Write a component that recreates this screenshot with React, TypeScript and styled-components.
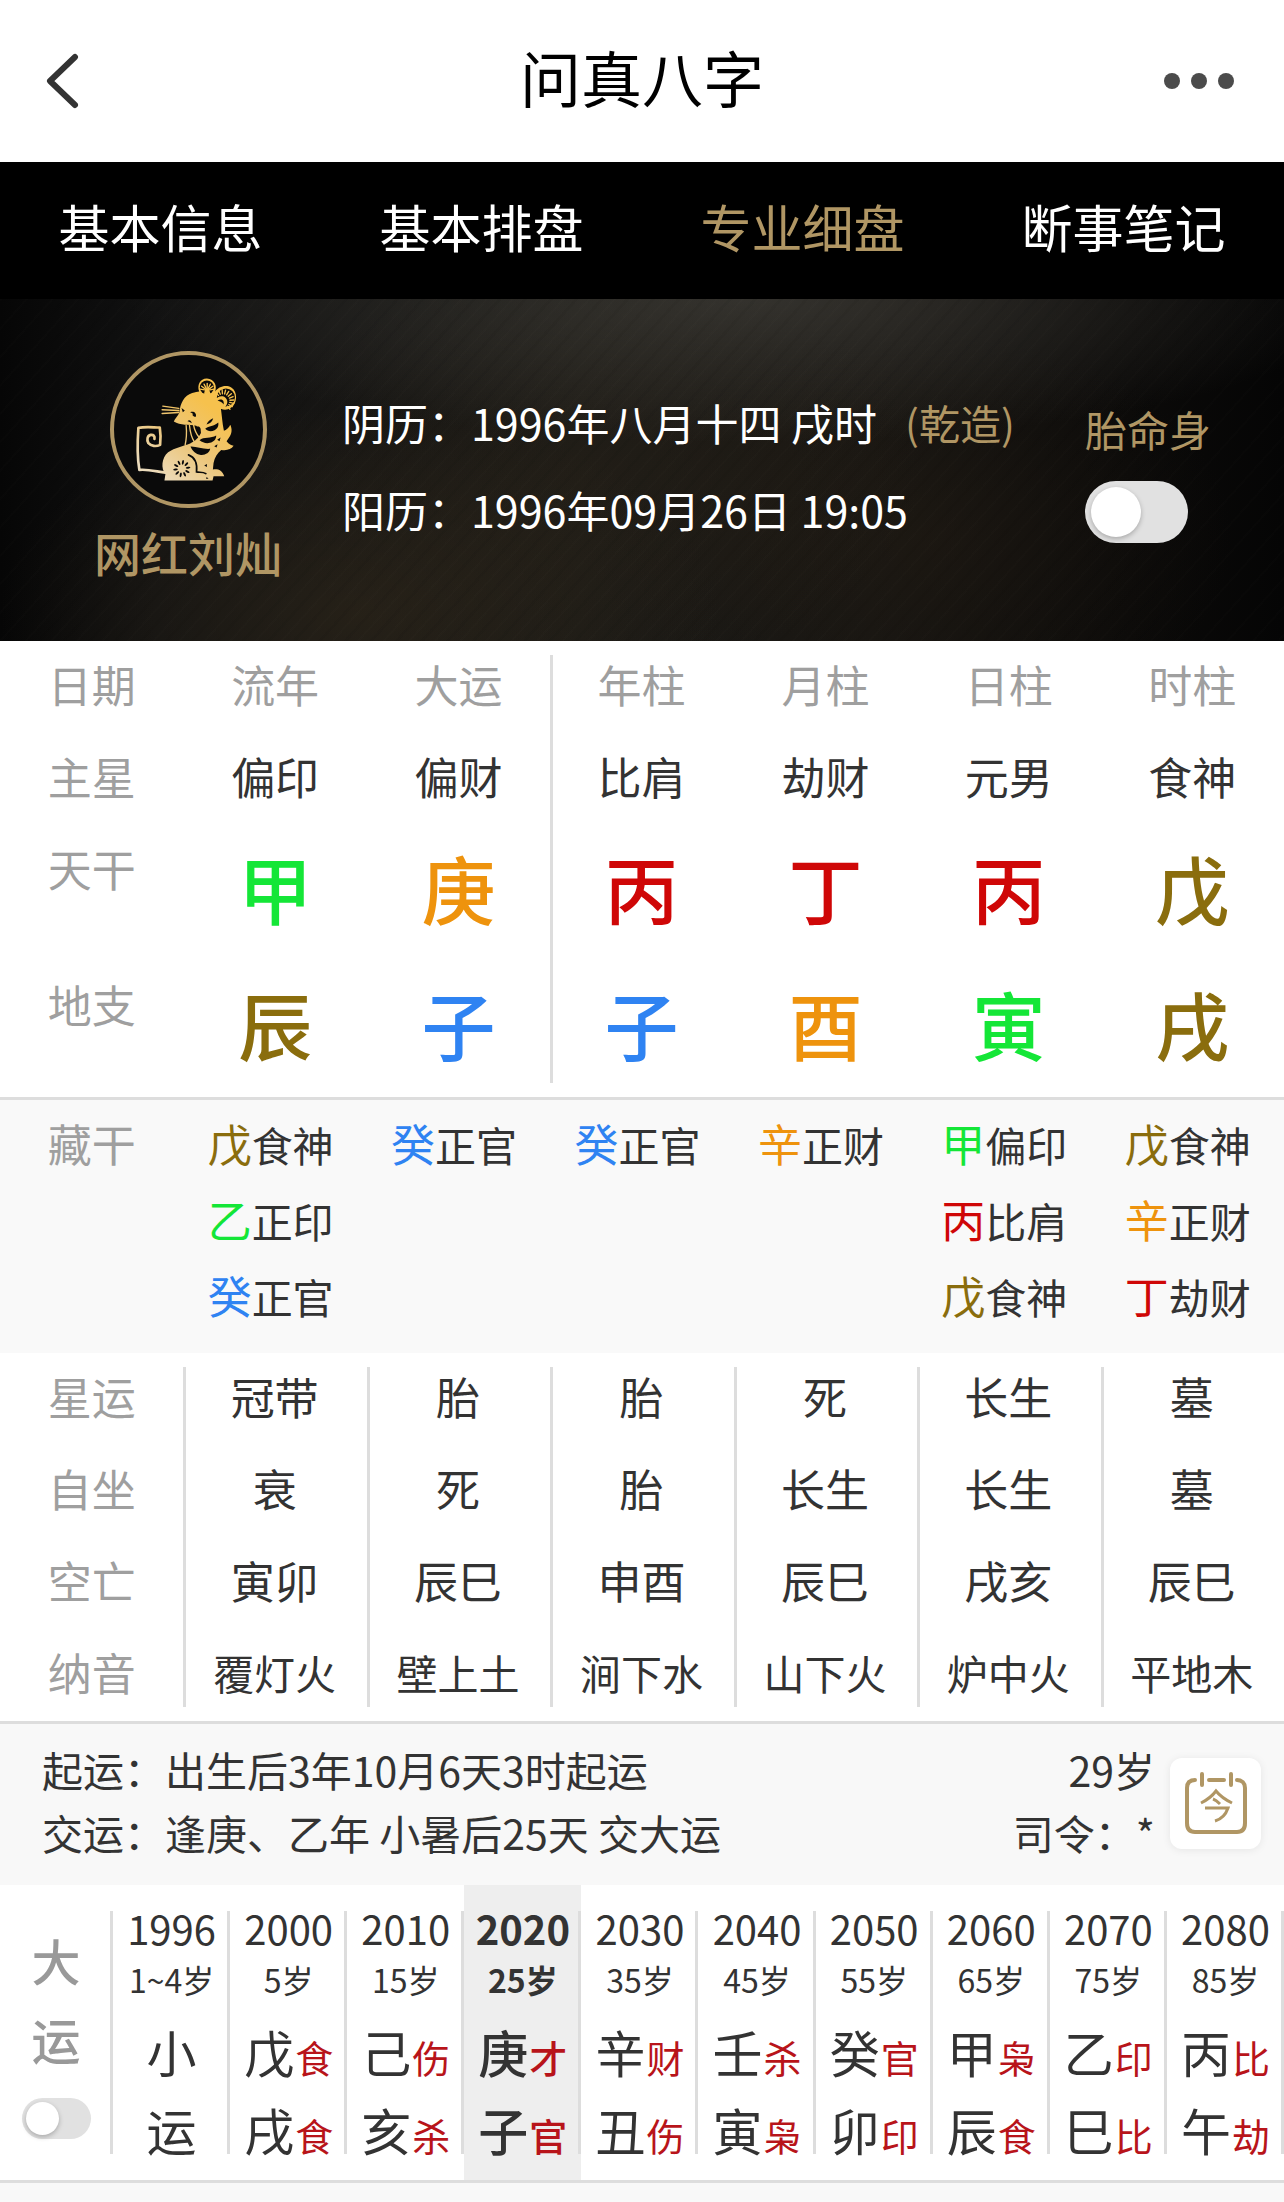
import React, { useState } from "react";
import styled, { createGlobalStyle, css } from "styled-components";

const GOLD = "#b09664";
const INK = "#333333";
const MUTED = "#9f9f9f";
const LINE = "#dddddd";

const wuxing = {
  wood: "#14e637",
  fire: "#cf0707",
  earth: "#8a6d0d",
  metal: "#ee930d",
  water: "#2f83f2",
};
type Element = keyof typeof wuxing;

const elementOf: Record<string, Element> = {
  甲: "wood", 乙: "wood", 寅: "wood",
  丙: "fire", 丁: "fire",
  戊: "earth", 辰: "earth", 戌: "earth",
  庚: "metal", 辛: "metal", 酉: "metal",
  癸: "water", 子: "water",
};

const GlobalStyle = createGlobalStyle`
  *, *::before, *::after { box-sizing: border-box; }
  body {
    margin: 0;
    background: #f8f8f8;
    color: ${INK};
    font-family: "Noto Sans CJK SC", "Noto Sans", sans-serif;
    font-size: 44px;
  }
  button { font: inherit; color: inherit; border: 0; padding: 0; background: none; cursor: pointer; }
`;

/* ---------- top bar ---------- */

const TopBar = styled.header`
  display: grid;
  grid-template-columns: 1fr auto 1fr;
  align-items: center;
  height: 162px;
  padding: 0 46px;
  background: #fff;
`;

const Title = styled.h1`
  margin: 0;
  padding-bottom: 8px;
  font-size: 61px;
  font-weight: 400;
  line-height: 80px;
  color: #000;
`;

const IconButton = styled.button<{ $end?: boolean }>`
  display: flex;
  justify-self: ${(p) => (p.$end ? "end" : "start")};
`;

/* ---------- tabs ---------- */

const Tabs = styled.nav`
  display: grid;
  grid-template-columns: repeat(4, 1fr);
  background: #000;
`;

const Tab = styled.button<{ $active: boolean }>`
  height: 137px;
  padding-bottom: 10px;
  font-size: 51px;
  line-height: 68px;
  color: ${(p) => (p.$active ? GOLD : "#fff")};
`;

/* ---------- profile ---------- */

const Hero = styled.section`
  display: flex;
  align-items: flex-start;
  padding: 52px 73px 57px 94px;
  background:
    repeating-linear-gradient(132deg, rgba(255, 240, 210, 0.008) 0 2px, transparent 2px 9px, rgba(0, 0, 0, 0.05) 9px 12px, transparent 12px 19px),
    radial-gradient(ellipse 48% 42% at 58% 0%, rgba(74, 72, 66, 0.55), transparent),
    radial-gradient(ellipse 28% 60% at 28% 92%, rgba(54, 44, 28, 0.5), transparent),
    radial-gradient(ellipse 26% 60% at 46% 50%, rgba(44, 36, 24, 0.4), transparent),
    radial-gradient(ellipse 24% 60% at 72% 70%, rgba(38, 30, 20, 0.4), transparent),
    linear-gradient(90deg, #060606 0%, #111111 12%, #1a1916 45%, #171512 68%, #0b0a09 88%, #050505 100%);
`;

const Profile = styled.div`
  display: flex;
  flex-direction: column;
  align-items: center;
  gap: 12px;
  width: 188px;
`;

const ProfileName = styled.div`
  font-size: 47px;
  font-weight: 500;
  line-height: 64px;
  white-space: nowrap;
  color: ${GOLD};
`;

const Dates = styled.div`
  flex: 1;
  padding: 28px 0 0 60px;
`;

const DateLine = styled.p`
  display: flex;
  margin: 0;
  font-size: 43px;
  line-height: 87px;
  white-space: nowrap;
  color: #fff;
`;

const Gender = styled.span`
  padding-left: 28px;
  font-size: 41px;
  color: ${GOLD};
`;

const ToggleField = styled.label`
  display: flex;
  flex-direction: column;
  align-items: flex-start;
  gap: 22px;
  width: 126px;
  padding-top: 48px;
  font-size: 42px;
  line-height: 60px;
  white-space: nowrap;
  color: ${GOLD};
`;

const Switch = styled.input<{ $small?: boolean }>`
  --w: ${(p) => (p.$small ? "69px" : "103px")};
  --h: ${(p) => (p.$small ? "41px" : "62px")};
  --pad: ${(p) => (p.$small ? "4px" : "6px")};
  appearance: none;
  display: flex;
  width: var(--w);
  height: var(--h);
  margin: 0;
  padding: var(--pad);
  border-radius: 31px;
  background: #e1e1e1;
  cursor: pointer;

  &::before {
    content: "";
    height: 100%;
    aspect-ratio: 1;
    border-radius: 50%;
    background: #fff;
    box-shadow: 0 2px 5px rgba(0, 0, 0, 0.25);
  }
  &:checked { justify-content: flex-end; background: ${GOLD}; }
`;

/* ---------- pillar tables ---------- */

const Panel = styled.section<{ $shade?: boolean; $ruled?: boolean }>`
  padding: 14px 0;
  background: ${(p) => (p.$shade ? "#f9f9f9" : "#fff")};
  ${(p) => p.$ruled && css`border-bottom: 3px solid ${LINE};`}
`;

const Grid = styled.table`
  width: 100%;
  table-layout: fixed;
  border-spacing: 0;
`;

const cellBase = css`
  padding: 0 0 34px;
  font-weight: 400;
  line-height: 58px;
  text-align: center;
  vertical-align: top;
  white-space: nowrap;
  tbody tr:last-child > & { padding-bottom: 6px; }
`;

const split = css`
  border-left: 3px solid ${LINE};
  padding-right: 4px;
`;

const Label = styled.th`
  ${cellBase}
  color: ${MUTED};
`;

const Cell = styled.td<{ $split?: boolean; $small?: boolean }>`
  ${cellBase}
  ${(p) => p.$split && split}
  ${(p) => p.$small && css`font-size: 41px;`}
`;

const ColumnHead = styled(Label)<{ $split?: boolean }>`
  ${(p) => p.$split && split}
`;

const BigCell = styled(Cell)<{ $element: Element }>`
  padding-bottom: 40px;
  font-size: 74px;
  font-weight: 500;
  line-height: 96px;
  color: ${(p) => wuxing[p.$element]};
  tbody tr:last-child > & { padding-bottom: 12px; }
`;

const HiddenPanel = styled(Panel)`
  padding: 5px 0 14px;
`;

const HiddenLine = styled.div`
  display: flex;
  justify-content: center;
  align-items: baseline;
  height: 76px;
  padding-right: 9px;
  font-size: 41px;
  line-height: 76px;
`;

const HiddenLabel = styled(Label)`
  line-height: 76px;
`;

const Stem = styled.span<{ $element: Element }>`
  font-size: 44px;
  color: ${(p) => wuxing[p.$element]};
`;

/* ---------- luck start info ---------- */

const LuckInfo = styled.section`
  display: flex;
  align-items: center;
  padding: 14px 23px 21px 42px;
  font-size: 41px;
  line-height: 63px;
  white-space: nowrap;
`;

const InfoLines = styled.div<{ $end?: boolean }>`
  ${(p) => (p.$end ? css`text-align: right; padding-right: 15px;` : css`flex: 1;`)}
  p { margin: 0; }
`;

const TodayButton = styled.button`
  display: flex;
  align-items: center;
  justify-content: center;
  width: 91px;
  height: 91px;
  margin-top: 4px;
  border-radius: 12px;
  background: #fff;
  box-shadow: 0 1px 8px rgba(0, 0, 0, 0.08);
`;

/* ---------- ten-year luck ---------- */

const Luck = styled.section`
  display: flex;
  background: #fff;
  border-bottom: 3px solid ${LINE};
`;

const LuckSide = styled.label`
  display: flex;
  flex-direction: column;
  align-items: center;
  width: 113px;
  height: 243px;
  margin: 26px 0;
  padding: 9px 0 0 2px;
  border-right: 3px solid ${LINE};
  font-size: 49px;
  font-weight: 500;
  line-height: 79px;
  color: #999;
`;

const SideText = styled.span`
  width: 49px;
  margin-bottom: 20px;
`;

const LuckSteps = styled.div`
  flex: 1;
  display: grid;
  grid-template-columns: repeat(10, 1fr);
`;

const Step = styled.button<{ $active: boolean }>`
  min-width: 0;
  padding: 26px 0;
  background: ${(p) => (p.$active ? "#eeeeee" : "transparent")};
  font-weight: ${(p) => (p.$active ? 700 : 400)};
`;

const StepBody = styled.span`
  display: flex;
  flex-direction: column;
  align-items: center;
  height: 243px;
  padding-left: 3px;
  border-right: 3px solid ${LINE};
  white-space: nowrap;
`;

const Year = styled.span`
  font-size: 40px;
  line-height: 34px;
`;

const Age = styled.span`
  margin: 14px 0 28px;
  font-size: 32px;
  line-height: 40px;
`;

const Pair = styled.span<{ $active: boolean }>`
  display: flex;
  align-items: baseline;
  gap: 1px;
  height: 48px;
  margin-bottom: 30px;
  font-size: 50px;
  font-weight: ${(p) => (p.$active ? 500 : 400)};
  line-height: 48px;
  &:last-child { margin-bottom: 0; }
`;

const God = styled.span`
  font-size: 38px;
  color: #b8141a;
`;

/* ---------- drawings ---------- */

const RatBadge = () => {
  const petals = Array.from({ length: 10 }, (_, i) => i * 36 + 10);
  const fan = (cx: number, cy: number, r0: number, r1: number, from: number, to: number, n: number) =>
    Array.from({ length: n }, (_, i) => {
      const a = ((from + ((to - from) * i) / (n - 1)) * Math.PI) / 180;
      return (
        <line key={i} x1={cx + r0 * Math.cos(a)} y1={cy + r0 * Math.sin(a)} x2={cx + r1 * Math.cos(a)} y2={cy + r1 * Math.sin(a)} />
      );
    });
  return (
    <svg width="157" height="157" viewBox="30 33 470 470" aria-hidden="true">
      <defs>
        <linearGradient id="rat" gradientUnits="userSpaceOnUse" x1="330" y1="200" x2="170" y2="410">
          <stop offset="0" stopColor="#f6c14d" />
          <stop offset="0.5" stopColor="#ecc67b" />
          <stop offset="1" stopColor="#ecdcbd" />
        </linearGradient>
      </defs>
      <circle cx="265" cy="268" r="229" fill="#0a0a0a" stroke={GOLD} strokeWidth="12" />
      <g fill="none" stroke="url(#rat)" strokeLinecap="round" strokeLinejoin="round">
        <path strokeWidth="8" d="M196 397 C170 394 142 386 118 389 C111 350 112 305 115 263 C138 259 160 262 179 262 C182 281 182 298 180 314 C168 320 153 318 145 309 C139 299 142 286 152 284 C160 283 165 288 163 296" />
        <path strokeWidth="4" d="M188 198 L236 205 M186 209 L236 211 M186 220 L236 217" />
        <path strokeWidth="4" d="M258 256 C260 278 259 296 255 314 M268 256 C270 276 274 292 282 304 M280 254 C283 270 289 282 297 292" />
      </g>
      <path
        fill="url(#rat)"
        d="M221 244 C224 235 232 229 238 217 C240 190 252 166 276 159 C285 156 292 155 297 154 C290 136 299 115 320 115 C343 116 352 138 344 155 C354 140 376 132 393 142 C413 154 412 190 392 203 C382 210 371 210 362 206 C365 226 366 248 371 272 C378 270 387 262 390 254 C396 266 396 281 385 294 L379 303 C386 312 393 315 400 317 C393 328 378 332 363 329 C352 338 343 351 340 368 L338 388 C350 385 366 388 372 408 L340 408 L337 421 L193 421 L196 401 C182 386 184 352 204 336 C224 323 250 318 270 310 C284 304 297 292 302 278 C300 270 295 262 288 257 C268 252 240 257 221 244 Z"
      />
      <circle cx="320" cy="142" r="21" fill="#0a0a0a" />
      <circle cx="377" cy="172" r="27" fill="#0a0a0a" />
      <g stroke="url(#rat)" strokeWidth="4" strokeLinecap="round">
        {fan(321, 151, 4, 21, 190, 350, 7)}
        {fan(368, 182, 21, 33, 230, 410, 11)}
      </g>
      <path fill="url(#rat)" d="M312 166 C311 150 318 142 326 150 C331 156 331 162 329 168 Z M340 205 C338 180 352 164 372 170 C386 178 384 198 366 206 Z" />
      <g fill="#0a0a0a">
        <path d="M352 181 C363 174 373 180 370 193 C366 186 360 184 352 181 Z" />
        <path d="M244 204 L254 211 L248 216 Z M262 243 C266 238 273 240 275 249 C270 245 266 244 262 243 Z" />
        <path d="M270 216 C281 212 290 219 287 230 C282 230 278 227 276 223 C280 224 282 221 270 216 Z" />
        <path d="M319 253 C323 243 331 237 339 234 C337 243 330 250 319 253 Z M289 260 C298 257 304 261 301 281 C296 276 292 268 289 260 Z" />
        <path d="M315 266 C326 256 341 259 354 247 C356 256 352 266 343 270 C332 276 322 273 315 266 Z" />
        <path d="M298 300 C311 289 332 296 348 286 C348 297 341 305 329 308 C316 311 307 306 298 300 Z" />
        <path d="M271 319 C289 318 308 328 330 326 C328 338 316 345 302 344 C286 342 276 332 271 319 Z" />
        <path d="M351 299 L361 292 L358 303 Z M342 318 L352 312 L349 322 Z M312 376 L320 371 L320 380 Z M319 410 L325 415 L318 416 Z" />
      </g>
      <path fill="none" stroke="#0a0a0a" strokeWidth="5" strokeLinecap="round" d="M265 344 C283 351 292 368 289 395 C298 397 308 394 317 400" />
      {petals.map((a) => (
        <ellipse key={a} cx="245" cy="366" rx="3" ry="7" fill="#0a0a0a" transform={`rotate(${a} 245 385)`} />
      ))}
    </svg>
  );
};

const CalendarIcon = () => (
  <svg width="64" height="64" viewBox="0 0 64 64" fill="none" stroke={GOLD} strokeWidth="4" strokeLinecap="round" aria-hidden="true">
    <path d="M11 9 C5 9 3 12 3 17 V52 C3 58 6 61 11 61 H53 C58 61 61 58 61 52 V17 C61 12 58 9 53 9" />
    <path d="M18 3 V14 M47 3 V14 M25 9 H40" />
    <path strokeWidth="3" strokeLinecap="butt" d="M17 32 C23 29 29 24 32 20 C36 25 42 29 48 32 M29 28 C32 29 34 31 36 33 M21 37 H44 C42 43 38 48 31 50" />
  </svg>
);

/* ---------- data ---------- */

const tabs = ["基本信息", "基本排盘", "专业细盘", "断事笔记"];
const pillars = ["流年", "大运", "年柱", "月柱", "日柱", "时柱"];
const mainStars = ["偏印", "偏财", "比肩", "劫财", "元男", "食神"];
const stems = ["甲", "庚", "丙", "丁", "丙", "戊"];
const branches = ["辰", "子", "子", "酉", "寅", "戌"];
const hidden = [
  ["戊食神", "乙正印", "癸正官"],
  ["癸正官"],
  ["癸正官"],
  ["辛正财"],
  ["甲偏印", "丙比肩", "戊食神"],
  ["戊食神", "辛正财", "丁劫财"],
];
const cycles = [
  { label: "星运", values: ["冠带", "胎", "胎", "死", "长生", "墓"] },
  { label: "自坐", values: ["衰", "死", "胎", "长生", "长生", "墓"] },
  { label: "空亡", values: ["寅卯", "辰巳", "申酉", "辰巳", "戌亥", "辰巳"] },
  { label: "纳音", values: ["覆灯火", "壁上土", "涧下水", "山下火", "炉中火", "平地木"] },
];
const steps = [
  ["1996", "1~4岁", "小", "运"],
  ["2000", "5岁", "戊食", "戌食"],
  ["2010", "15岁", "己伤", "亥杀"],
  ["2020", "25岁", "庚才", "子官"],
  ["2030", "35岁", "辛财", "丑伤"],
  ["2040", "45岁", "壬杀", "寅枭"],
  ["2050", "55岁", "癸官", "卯印"],
  ["2060", "65岁", "甲枭", "辰食"],
  ["2070", "75岁", "乙印", "巳比"],
  ["2080", "85岁", "丙比", "午劫"],
];

export default function App() {
  const [tab, setTab] = useState(2);
  const [step, setStep] = useState(3);

  return (
    <>
      <GlobalStyle />
      <TopBar>
        <IconButton aria-label="返回">
          <svg width="33" height="60" viewBox="2 0 33 60" fill="none" stroke="#333" strokeWidth="6" strokeLinecap="round" strokeLinejoin="round">
            <path d="M31 6 L6 30 L31 54" />
          </svg>
        </IconButton>
        <Title>问真八字</Title>
        <IconButton $end aria-label="更多">
          <svg width="74" height="16" viewBox="0 0 74 16" fill="#4b4b4b">
            <circle cx="8" cy="8" r="8" />
            <circle cx="35" cy="8" r="8" />
            <circle cx="62" cy="8" r="8" />
          </svg>
        </IconButton>
      </TopBar>

      <Tabs>
        {tabs.map((t, i) => (
          <Tab key={t} $active={i === tab} onClick={() => setTab(i)}>{t}</Tab>
        ))}
      </Tabs>

      <Hero>
        <Profile>
          <RatBadge />
          <ProfileName>网红刘灿</ProfileName>
        </Profile>
        <Dates>
          <DateLine>阴历：1996年八月十四 戌时<Gender>(乾造)</Gender></DateLine>
          <DateLine>阳历：1996年09月26日 19:05</DateLine>
        </Dates>
        <ToggleField>
          胎命身
          <Switch type="checkbox" />
        </ToggleField>
      </Hero>

      <Panel $ruled>
        <Grid>
          <thead>
            <tr>
              <Label scope="col">日期</Label>
              {pillars.map((p, i) => <ColumnHead key={p} scope="col" $split={i === 2}>{p}</ColumnHead>)}
            </tr>
          </thead>
          <tbody>
            <tr>
              <Label scope="row">主星</Label>
              {mainStars.map((s, i) => <Cell key={i} $split={i === 2}>{s}</Cell>)}
            </tr>
            <tr>
              <Label scope="row">天干</Label>
              {stems.map((s, i) => <BigCell key={i} $split={i === 2} $element={elementOf[s]}>{s}</BigCell>)}
            </tr>
            <tr>
              <Label scope="row">地支</Label>
              {branches.map((s, i) => <BigCell key={i} $split={i === 2} $element={elementOf[s]}>{s}</BigCell>)}
            </tr>
          </tbody>
        </Grid>
      </Panel>

      <HiddenPanel $shade>
        <Grid>
          <tbody>
            <tr>
              <HiddenLabel scope="row">藏干</HiddenLabel>
              {hidden.map((list, i) => (
                <Cell key={i}>
                  {list.map((h) => (
                    <HiddenLine key={h}>
                      <Stem $element={elementOf[h[0]]}>{h[0]}</Stem>{h.slice(1)}
                    </HiddenLine>
                  ))}
                </Cell>
              ))}
            </tr>
          </tbody>
        </Grid>
      </HiddenPanel>

      <Panel $ruled>
        <Grid>
          <tbody>
            {cycles.map((row) => (
              <tr key={row.label}>
                <Label scope="row">{row.label}</Label>
                {row.values.map((v, i) => <Cell key={i} $split $small={v.length > 2}>{v}</Cell>)}
              </tr>
            ))}
          </tbody>
        </Grid>
      </Panel>

      <LuckInfo>
        <InfoLines>
          <p>起运：出生后3年10月6天3时起运</p>
          <p>交运：逢庚、乙年 小暑后25天 交大运</p>
        </InfoLines>
        <InfoLines $end>
          <p>29岁</p>
          <p>司令：*</p>
        </InfoLines>
        <TodayButton aria-label="今"><CalendarIcon /></TodayButton>
      </LuckInfo>

      <Luck>
        <LuckSide>
          <SideText>大运</SideText>
          <Switch type="checkbox" $small />
        </LuckSide>
        <LuckSteps>
          {steps.map(([year, age, top, bottom], i) => (
            <Step key={year} $active={i === step} onClick={() => setStep(i)}>
              <StepBody>
                <Year>{year}</Year>
                <Age>{age}</Age>
                <Pair $active={i === step}>{top[0]}{top[1] && <God>{top[1]}</God>}</Pair>
                <Pair $active={i === step}>{bottom[0]}{bottom[1] && <God>{bottom[1]}</God>}</Pair>
              </StepBody>
            </Step>
          ))}
        </LuckSteps>
      </Luck>
    </>
  );
}
